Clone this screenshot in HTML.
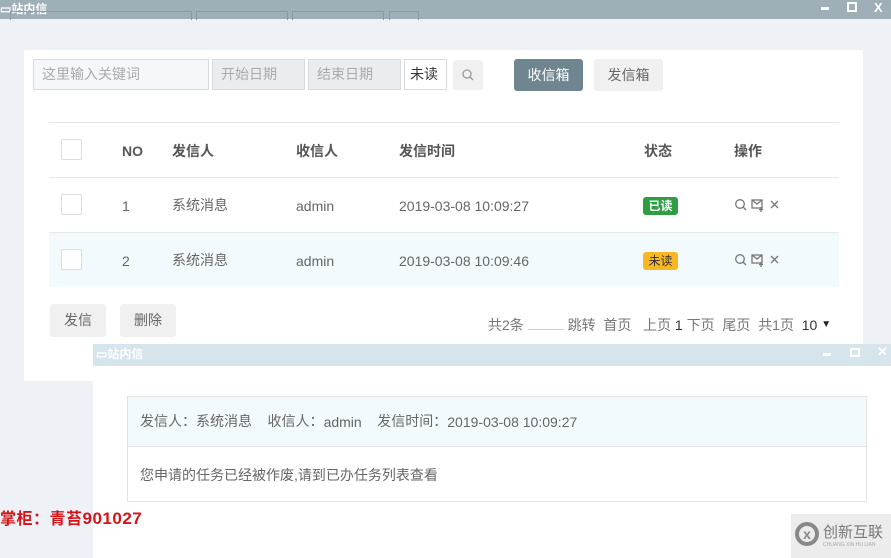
<!DOCTYPE html>
<html><head><meta charset="utf-8"><style>
*{margin:0;padding:0;box-sizing:border-box}
body{width:891px;height:558px;overflow:hidden;background:#eef2f6;font-family:"Liberation Sans","Noto Sans CJK SC",sans-serif;font-size:14px;color:#666;position:relative}
.a{position:absolute;line-height:20px;white-space:nowrap}
.cb{position:absolute;width:21px;height:21px;border:1px solid #ddd;background:#fff;border-radius:2px}
.inp{position:absolute;height:31px;border:1px solid #d5dbe0;line-height:29px;padding-left:8px;color:#aaa;font-size:14px}
.btn{position:absolute;background:#f0f0f0;border-radius:3px;text-align:center;color:#666}
.n{font-family:"Liberation Sans",sans-serif;position:relative;top:1px}
</style></head><body>
<div class="a" style="left:0;top:0;width:891px;height:19px;background:#9eafb8"></div>
<div class="a" style="left:0;top:-1px;color:#fff;font-size:12px;font-weight:bold">▭站内信</div>
<div class="a" style="left:10px;top:11px;width:182px;height:9px;border:1px solid #8b9ca6;border-bottom:none"></div>
<div class="a" style="left:196px;top:11px;width:92px;height:9px;border:1px solid #8b9ca6;border-bottom:none"></div>
<div class="a" style="left:292px;top:11px;width:92px;height:9px;border:1px solid #8b9ca6;border-bottom:none"></div>
<div class="a" style="left:389px;top:11px;width:30px;height:9px;border:1px solid #8b9ca6;border-bottom:none"></div>
<div class="a" style="left:821px;top:7px;width:8px;height:3px;background:#fff"></div>
<div class="a" style="left:847px;top:2px;width:10px;height:10px;border:2px solid #fff"></div>
<div class="a" style="left:874px;top:-2px;color:#fff;font-size:13px;font-weight:bold">X</div>

<div class="a" style="left:24px;top:50px;width:839px;height:331px;background:#fff"></div>
<div class="inp" style="left:33px;top:59px;width:176px;background:#f5f7fa">这里输入关键词</div>
<div class="inp" style="left:212px;top:59px;width:93px;background:#e9edf0">开始日期</div>
<div class="inp" style="left:308px;top:59px;width:93px;background:#e9edf0">结束日期</div>
<div class="inp" style="left:404px;top:59px;width:43px;background:#fff;color:#333;padding-left:5px">未读</div>
<div class="btn" style="left:453px;top:60px;width:30px;height:30px"><svg width="30" height="30"><circle cx="14" cy="14" r="4" fill="none" stroke="#999" stroke-width="1.3"/><path d="M17 17l3 3" stroke="#999" stroke-width="1.3"/></svg></div>
<div class="btn" style="left:514px;top:59px;width:69px;height:32px;line-height:32px;background:#6f8691;color:#fff">收信箱</div>
<div class="btn" style="left:594px;top:59px;width:69px;height:32px;line-height:32px">发信箱</div>

<div class="a" style="left:49px;top:122px;width:790px;height:1px;background:#e8e8e8"></div>
<div class="a" style="left:49px;top:177px;width:790px;height:1px;background:#e8e8e8"></div>
<div class="a" style="left:49px;top:232px;width:790px;height:55px;background:#f2fafd;border-top:1px solid #e8e8e8"></div>
<div class="cb" style="left:61px;top:139px"></div>
<div class="cb" style="left:61px;top:194px"></div>
<div class="cb" style="left:61px;top:249px"></div>
<div class="a" style="top:141px;left:122px;font-weight:bold;color:#555"><span class="n" style="top:0">NO</span></div>
<div class="a" style="top:141px;left:172px;font-weight:bold;color:#555">发信人</div>
<div class="a" style="top:141px;left:296px;font-weight:bold;color:#555">收信人</div>
<div class="a" style="top:141px;left:399px;font-weight:bold;color:#555">发信时间</div>
<div class="a" style="top:141px;left:644px;font-weight:bold;color:#555">状态</div>
<div class="a" style="top:141px;left:734px;font-weight:bold;color:#555">操作</div>
<div class="a" style="top:196px;left:122px">1</div>
<div class="a" style="top:195px;left:172px">系统消息</div>
<div class="a" style="top:196px;left:296px">admin</div>
<div class="a" style="top:196px;left:399px">2019-03-08 10:09:27</div>
<div class="a" style="top:197px;left:643px;width:35px;height:18px;background:#2e9e43;color:#fff;font-size:12px;border-radius:3px;text-align:center;line-height:18px;font-weight:bold">已读</div>
<div class="a" style="top:251px;left:122px">2</div>
<div class="a" style="top:250px;left:172px">系统消息</div>
<div class="a" style="top:251px;left:296px">admin</div>
<div class="a" style="top:251px;left:399px">2019-03-08 10:09:46</div>
<div class="a" style="top:252px;left:643px;width:35px;height:18px;background:#f7b824;color:#333;font-size:12px;border-radius:3px;text-align:center;line-height:18px">未读</div>
<svg class="a" style="left:733px;top:197px" width="50" height="16"><g fill="none" stroke="#777" stroke-width="1.3"><circle cx="7" cy="7" r="4.3"/><path d="M10 10l3 3"/><rect x="19" y="3" width="10" height="8"/><path d="M19 3l5 4 5-4M28 10v5M26 12.5h4"/><path d="M38 4l7 7M45 4l-7 7"/></g></svg>
<svg class="a" style="left:733px;top:252px" width="50" height="16"><g fill="none" stroke="#777" stroke-width="1.3"><circle cx="7" cy="7" r="4.3"/><path d="M10 10l3 3"/><rect x="19" y="3" width="10" height="8"/><path d="M19 3l5 4 5-4M28 10v5M26 12.5h4"/><path d="M38 4l7 7M45 4l-7 7"/></g></svg>

<div class="btn" style="left:50px;top:304px;width:56px;height:33px;line-height:33px">发信</div>
<div class="btn" style="left:120px;top:304px;width:56px;height:33px;line-height:33px">删除</div>
<div class="a" style="left:488px;top:315px;color:#777">共2条 <span style="display:inline-block;width:36px;border-bottom:1px solid #ccc"></span> 跳转 &nbsp;首页 &nbsp;&nbsp;上页 <span style="color:#333">1</span> 下页 &nbsp;尾页 &nbsp;共1页 &nbsp;<span style="color:#333">10</span> <span style="font-size:10px;color:#222;position:relative;top:-3px">▼</span></div>

<div class="a" style="left:93px;top:344px;width:798px;height:22px;background:#d6e4ec"></div>
<div class="a" style="left:96px;top:344px;color:#fff;font-size:12px;font-weight:bold">▭站内信</div>
<div class="a" style="left:823px;top:353px;width:8px;height:3px;background:#fff"></div>
<div class="a" style="left:850px;top:348px;width:10px;height:9px;border:2px solid #fff"></div>
<div class="a" style="left:877px;top:342px;color:#fff;font-size:13px;font-weight:bold">✕</div>
<div class="a" style="left:93px;top:366px;width:798px;height:192px;background:#fff"></div>
<div class="a" style="left:127px;top:396px;width:740px;height:106px;border:1px solid #e4e4e4"></div>
<div class="a" style="left:128px;top:397px;width:738px;height:50px;background:#f2fafd;border-bottom:1px solid #e4e4e4"></div>
<div class="a" style="left:140px;top:411px">发信人：系统消息 &nbsp;&nbsp; 收信人：<span class="n">admin</span> &nbsp;&nbsp; 发信时间：<span class="n">2019-03-08 10:09:27</span></div>
<div class="a" style="left:140px;top:465px">您申请的任务已经被作废,请到已办任务列表查看</div>

<div class="a" style="left:0;top:509px;color:#d3141a;font-size:16px;font-weight:bold;letter-spacing:0.5px">掌柜：青苔<span style="font-family:'Liberation Sans Narrow','Liberation Sans',sans-serif;font-size:17px">901027</span></div>
<div class="a" style="left:791px;top:514px;width:100px;height:44px;background:#ececec"></div>
<div class="a" style="left:795px;top:522px;width:24px;height:24px;border:4px solid #888;border-radius:50%;color:#888;font-weight:bold;font-size:14px;line-height:16px;text-align:center">x</div>
<div class="a" style="left:823px;top:523px;color:#777;font-size:15px">创新互联</div>
<div class="a" style="left:823px;top:542px;color:#aaa;font-size:5px;line-height:6px">CHUANG XIN HU LIAN</div>
</body></html>
